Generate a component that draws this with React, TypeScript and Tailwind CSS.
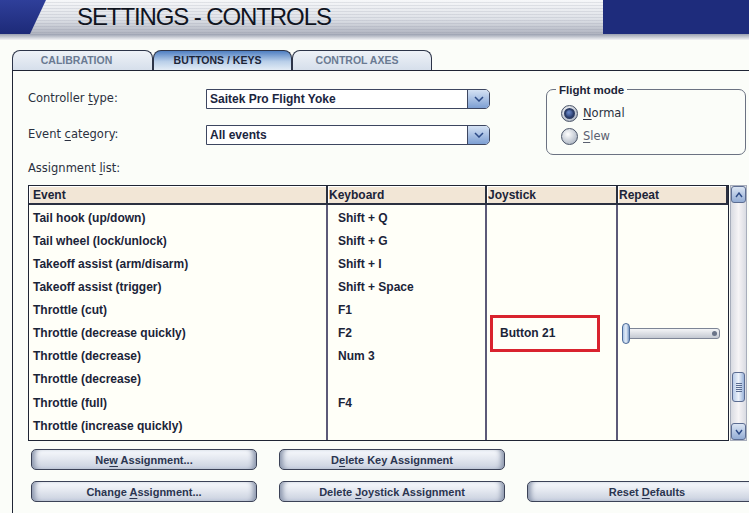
import { ReactNode } from 'react'

const font = { fontFamily: '"Liberation Sans", Arial, sans-serif' }
const labelFont = { fontFamily: '"DejaVu Sans", Verdana, sans-serif' }

type Row = { event: string, key?: string, joy?: string, repeat?: boolean }

const rows: Row[] = [
  { event: 'Tail hook (up/down)', key: 'Shift + Q' },
  { event: 'Tail wheel (lock/unlock)', key: 'Shift + G' },
  { event: 'Takeoff assist (arm/disarm)', key: 'Shift + I' },
  { event: 'Takeoff assist (trigger)', key: 'Shift + Space' },
  { event: 'Throttle (cut)', key: 'F1' },
  { event: 'Throttle (decrease quickly)', key: 'F2', joy: 'Button 21', repeat: true },
  { event: 'Throttle (decrease)', key: 'Num 3' },
  { event: 'Throttle (decrease)' },
  { event: 'Throttle (full)', key: 'F4' },
  { event: 'Throttle (increase quickly)' },
]

function U({ children }: { children: ReactNode }){
  return <span className="underline underline-offset-2">{children}</span>
}

function Btn({ children, w = 'w-[226px]' }: { children: ReactNode, w?: string }){
  return (
    <div className={`${w} shrink-0 h-[21px] rounded-[5px] border border-[#3b4257] bg-[linear-gradient(to_bottom,#f7f9fc_0%,#e4e8f0_45%,#c9d0de_100%)] shadow-[inset_6px_0_5px_-3px_#8c97ad,inset_-6px_0_5px_-3px_#8c97ad] flex items-center justify-center text-[11px] font-bold text-[#2b3550]`} style={font}>
      <span>{children}</span>
    </div>
  )
}

function Select({ value }: { value: string }){
  return (
    <div className="w-[284px] h-[20px] flex border border-[#3d4660] rounded-r-[5px] bg-white">
      <div className="flex-1 flex items-center pl-[3px] text-[12px] font-bold text-[#1b2540]" style={font}>{value}</div>
      <div className="w-[22px] rounded-r-[4px] border-l border-[#3d4660] bg-[linear-gradient(to_bottom,#d5e2f4,#7d9fd3)] flex items-center justify-center">
        <svg width="10" height="6" viewBox="0 0 10 6"><path d="M1 1 L5 5 L9 1" fill="none" stroke="#2c4a86" strokeWidth="1.5"/></svg>
      </div>
    </div>
  )
}

function Radio({ on, label }: { on?: boolean, label: ReactNode }){
  return (
    <div className="flex items-center gap-[5px] h-[23px]">
      <div className="w-[17px] h-[17px] rounded-full border border-[#4a5468] bg-[radial-gradient(circle_at_40%_35%,#ffffff,#b7bfcb_70%,#8e97a6)] flex items-center justify-center">
        {on && <div className="w-[11px] h-[11px] rounded-full border-2 border-[#2c3d66] bg-[radial-gradient(circle_at_40%_35%,#6d8ccc,#1d2f5e)]" />}
      </div>
      <span className="text-[11.5px] text-[#2a3040]" style={labelFont}>{label}</span>
    </div>
  )
}

export default function App(){
  return (
    <div className="w-[749px] h-[513px] overflow-hidden bg-[#fbfdf9] text-[#1b2438]" style={font}>
      {/* header */}
      <div className="h-[34px] flex bg-[linear-gradient(to_bottom,#2f3f9a,#1d2a78)]">
        <div className="w-[30px]" />
        <div className="w-[573px] bg-[linear-gradient(to_bottom,#f6f7f9,#dfe2e8_55%,#b0b4c0)] [clip-path:polygon(16px_0,100%_0,100%_100%,0_100%)] relative">
          <div className="absolute inset-0 bg-[repeating-linear-gradient(to_bottom,transparent_0px,transparent_2px,rgba(120,126,145,0.16)_2px,rgba(120,126,145,0.16)_3px)]" />
          <div className="relative pl-[47px] pt-[2px] text-[24px] leading-[30px] tracking-[-1.1px] text-[#10141f]" style={font}>
            SETTINGS - CONTROLS
          </div>
        </div>
        <div className="flex-1 bg-[#1e2c7c]" />
      </div>
      <div className="h-[6px] bg-[linear-gradient(to_bottom,#9aa0b0,#f2f3f5)]" />

      {/* tabs */}
      <div className="pl-[12px] pt-[10px] flex">
        <div className="w-[141px] h-[20px] rounded-t-[8px] border border-b-0 border-[#2c3448] bg-[linear-gradient(to_bottom,#eef2f7,#d6dfeb)] flex items-center justify-center pr-[12px] text-[10.5px] font-bold text-[#6a7a92]">CALIBRATION</div>
        <div className="w-[139px] h-[20px] rounded-t-[8px] border border-b-0 border-[#2c3448] bg-[linear-gradient(to_bottom,#4f7fc2,#b9cfe9_55%,#e3ecf6)] flex items-center justify-center pr-[10px] text-[10.5px] font-bold text-[#1b2438]">BUTTONS / KEYS</div>
        <div className="w-[140px] h-[20px] rounded-t-[8px] border border-b-0 border-[#2c3448] bg-[linear-gradient(to_bottom,#eef2f7,#d6dfeb)] flex items-center justify-center pr-[10px] text-[10.5px] font-bold text-[#6a7a92]">CONTROL AXES</div>
      </div>

      {/* panel */}
      <div className="ml-[12px] border-l border-t border-[#1f2535] h-[500px] pl-[15px]">
        <div className="flex">
          <div className="w-[520px] pt-[18px]">
            <div className="flex items-center h-[20px]">
              <div className="w-[178px] text-[11.5px] text-[#2a3040]" style={labelFont}>Controller <U>t</U>ype:</div>
              <Select value="Saitek Pro Flight Yoke" />
            </div>
            <div className="flex items-center h-[20px] mt-[16px]">
              <div className="w-[178px] text-[11.5px] text-[#2a3040]" style={labelFont}>Event <U>c</U>ategory:</div>
              <Select value="All events" />
            </div>
            <div className="mt-[15px] text-[11.5px] text-[#2a3040]" style={labelFont}>Assignment <U>l</U>ist:</div>
          </div>
          <div className="pt-[18px] ml-[-2px]">
            <div className="relative w-[200px] h-[66px] border border-[#6b7282] rounded-[7px] pl-[14px] pt-[12px]">
              <div className="absolute -top-[8px] left-[9px] px-[3px] bg-[#fbfdf9] text-[11.5px] font-bold text-[#1b2438]">Flight mode</div>
              <Radio on label={<><U>N</U>ormal</>} />
              <Radio label={<span className="text-[#5a6070]"><U>S</U>lew</span>} />
            </div>
          </div>
        </div>

        {/* table */}
        <div className="flex mt-[8px]">
          <div className="w-[701px] h-[256px] border border-[#1f2535] bg-[#fffff8] flex flex-col">
            <div className="flex h-[19px] text-[12px] font-bold text-[#1b2438]">
              <div className="w-[299px] bg-[#f2e6d6] border-r-[2px] border-b-[2px] border-[#2b3040] shadow-[inset_1px_1px_0_#ffffff] pl-[4px] flex items-center">Event</div>
              <div className="w-[159px] bg-[#f2e6d6] border-r-[2px] border-b-[2px] border-[#2b3040] shadow-[inset_1px_1px_0_#ffffff] pl-[1px] flex items-center">Keyboard</div>
              <div className="w-[131px] bg-[#f2e6d6] border-r-[2px] border-b-[2px] border-[#2b3040] shadow-[inset_1px_1px_0_#ffffff] pl-[1px] flex items-center">Joystick</div>
              <div className="flex-1 bg-[#f2e6d6] border-r-[2px] border-b-[2px] border-[#2b3040] shadow-[inset_1px_1px_0_#ffffff] pl-[1px] flex items-center">Repeat</div>
            </div>
            <div className="flex flex-1 text-[12px] font-bold text-[#1b2438]">
              <div className="w-[299px] border-r-[2px] border-[#5c5a78] pt-[1px]">
                {rows.map((r, i) => <div key={i} className="h-[23.1px] flex items-center pl-[4px]">{r.event}</div>)}
              </div>
              <div className="w-[159px] border-r-[2px] border-[#5c5a78] pt-[1px]">
                {rows.map((r, i) => <div key={i} className="h-[23.1px] flex items-center pl-[10px]">{r.key}</div>)}
              </div>
              <div className="w-[131px] border-r-[2px] border-[#5c5a78] pt-[1px]">
                {rows.map((r, i) => (
                  <div key={i} className="h-[23.1px] flex items-center pl-[13px] relative">
                    {r.joy && <div className="absolute left-[3px] top-[-7px] w-[110px] h-[37px] border-[3px] border-[#d9232e]" />}
                    {r.joy}
                  </div>
                ))}
              </div>
              <div className="flex-1 pt-[1px]">
                {rows.map((r, i) => (
                  <div key={i} className="h-[23.1px] flex items-center pl-[4px]">
                    {r.repeat && (
                      <div className="relative w-[98px] h-[20px] flex items-center">
                        <div className="ml-[2px] w-[96px] h-[11px] rounded-[3px] border border-[#7d8596] bg-[linear-gradient(to_bottom,#f4f5f7,#c4c9d2)] flex justify-end items-center pr-[2px]">
                          <div className="w-[5px] h-[5px] rounded-full bg-[#6a7488]" />
                        </div>
                        <div className="absolute left-0 top-0 w-[8px] h-[21px] rounded-[4px] border border-[#4c6a98] bg-[linear-gradient(to_right,#a9c4e6,#e6eef8,#7c9cc8)]" />
                      </div>
                    )}
                  </div>
                ))}
              </div>
            </div>
          </div>
          {/* scrollbar */}
          <div className="ml-[1px] w-[17px] h-[256px] bg-[linear-gradient(to_right,#d9dbe2,#f6f4f6,#d9dbe2)] border border-[#a7adbb] flex flex-col">
            <div className="h-[17px] rounded-[3px] border border-[#5c6d92] bg-[linear-gradient(to_bottom,#dbe5f3,#93acd4)] flex items-center justify-center">
              <svg width="8" height="6" viewBox="0 0 8 6"><path d="M1 5 L4 1 L7 5" fill="none" stroke="#2c4a86" strokeWidth="1.4"/></svg>
            </div>
            <div className="h-[169px]" />
            <div className="h-[30px] mx-[1px] rounded-[3px] border border-[#5c6d92] bg-[linear-gradient(to_right,#b8cbe8,#eef3fa,#9ab3da)] flex flex-col items-center justify-center gap-[1px]">
              {[0, 1, 2, 3, 4].map(i => <div key={i} className="w-[6px] h-[1px] bg-[#5a6d92]" />)}
            </div>
            <div className="flex-1" />
            <div className="h-[17px] rounded-[3px] border border-[#5c6d92] bg-[linear-gradient(to_bottom,#dbe5f3,#93acd4)] flex items-center justify-center">
              <svg width="8" height="6" viewBox="0 0 8 6"><path d="M1 1 L4 5 L7 1" fill="none" stroke="#2c4a86" strokeWidth="1.4"/></svg>
            </div>
          </div>
        </div>

        {/* buttons */}
        <div className="mt-[8px] pl-[3px] flex flex-col gap-[11px]">
          <div className="flex gap-[22px]">
            <Btn>Ne<U>w</U> Assignment...</Btn>
            <Btn>D<U>e</U>lete Key Assignment</Btn>
          </div>
          <div className="flex gap-[22px]">
            <Btn>Change <U>A</U>ssignment...</Btn>
            <Btn>Delete <U>J</U>oystick Assignment</Btn>
            <Btn w="w-[240px]">Reset <U>D</U>efaults</Btn>
          </div>
        </div>
      </div>
    </div>
  )
}
